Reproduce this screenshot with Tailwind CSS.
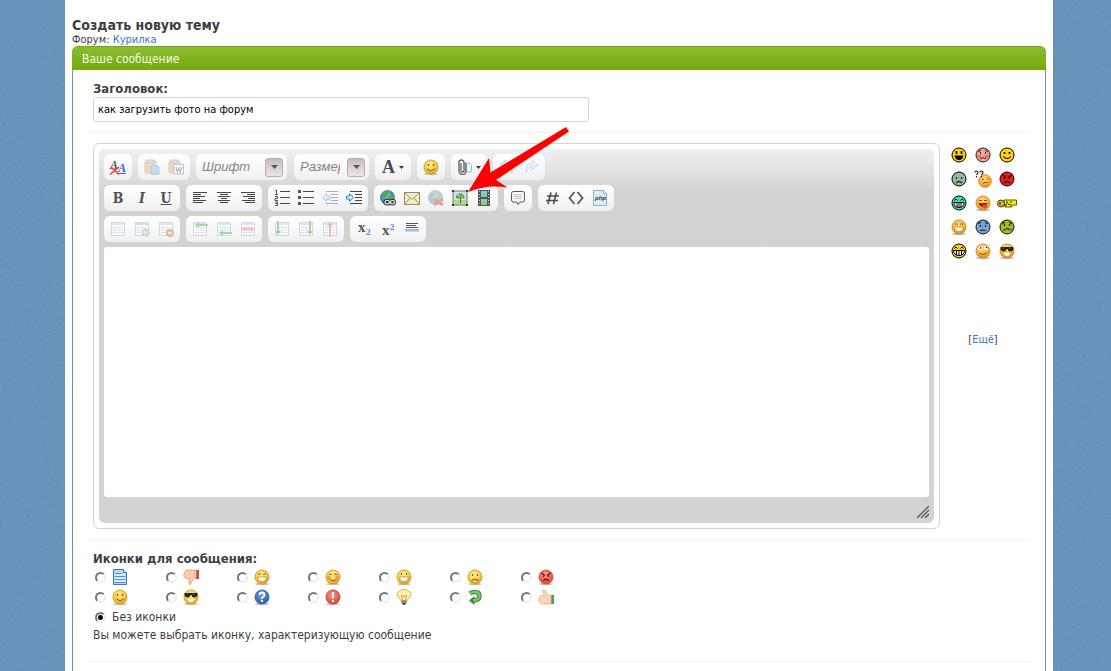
<!DOCTYPE html>
<html lang="ru">
<head>
  <meta charset="UTF-8">
  <meta name="viewport" content="width=device-width, initial-scale=1.0">
  <title>Создать новую тему</title>
  <script src="https://cdn.jsdelivr.net/npm/@tailwindcss/browser@4"></script>
</head>
<body class="relative min-h-screen bg-[#6691b9] font-['DejaVu_Sans_Condensed','DejaVu_Sans',sans-serif] font-stretch-condensed text-xs text-[#3e3e3e] overflow-x-hidden">

  <!-- Shared icon parts -->
  <svg class="absolute size-0" aria-hidden="true">
    <defs>
      <radialGradient id="gold" cx=".45" cy=".35" r=".65"><stop offset="0" stop-color="#fff0a0"/><stop offset=".6" stop-color="#f9cf4a"/><stop offset="1" stop-color="#dd9a1c"/></radialGradient>
      <radialGradient id="orange" cx=".45" cy=".3" r=".7"><stop offset="0" stop-color="#ffe080"/><stop offset=".6" stop-color="#f6b436"/><stop offset="1" stop-color="#e2862a"/></radialGradient>
      <radialGradient id="red" cx=".45" cy=".35" r=".65"><stop offset="0" stop-color="#f89a8c"/><stop offset="1" stop-color="#dc4436"/></radialGradient>
      <radialGradient id="blue" cx=".45" cy=".35" r=".65"><stop offset="0" stop-color="#6fa0d8"/><stop offset="1" stop-color="#2c5fa5"/></radialGradient>
      <radialGradient id="globe" cx=".4" cy=".3" r=".7"><stop offset="0" stop-color="#9cc8ff"/><stop offset="1" stop-color="#1c4fc0"/></radialGradient>
      <filter id="noise" x="0" y="0" width="100%" height="100%"><feTurbulence type="fractalNoise" baseFrequency=".45" numOctaves="3"/><feColorMatrix values="0 0 0 0 .2  0 0 0 0 .32  0 0 0 0 .5  2 0 0 0 -.8"/></filter>
    </defs>
    <symbol id="ball" viewBox="0 0 16 16"><ellipse cx="8" cy="15" rx="7" ry="1" fill="#bbb"/><circle cx="8" cy="8" r="7" fill="url(#gold)" stroke="#d9a01f"/></symbol>
    <symbol id="oball" viewBox="0 0 16 16"><ellipse cx="8" cy="15" rx="7" ry="1" fill="#bbb"/><circle cx="8" cy="8" r="7" fill="url(#orange)" stroke="#dc8a2c"/></symbol>
    <symbol id="grin" viewBox="0 0 16 16"><path d="M4 5.500q1.500-1.500 3 0M9 5.500q1.500-1.500 3 0" fill="none" stroke="#8a5a10"/><path d="M3.500 8h9q-.5 4.500-4.500 4.500T3.500 8z" fill="#fff" stroke="#b97a1a" stroke-width=".7"/></symbol>
    <symbol id="smile" viewBox="0 0 16 16"><path d="M5.500 5v2M10.500 5v2" stroke="#7a5210" stroke-width="1.300"/><path d="M4 9.500q4 4 8 0" fill="none" stroke="#8a5a10"/></symbol>
    <symbol id="shades" viewBox="0 0 16 16"><path d="M1.500 4h13v1.500q-.5 3-3.200 3Q9 8.500 8.500 6h-1Q7 8.500 4.700 8.500q-2.700 0-3.200-3z" fill="#222"/><path d="M3 5l2 0M9.500 5h2" stroke="#777" stroke-width=".8"/><path d="M4.500 10h7q-1 3-3.500 3t-3.500-3z" fill="#fff"/></symbol>
    <symbol id="grid" viewBox="0 0 16 16"><path d="M1.500 1.500h13v13h-13z" fill="#fff" stroke="#9fbfe4"/><path d="M2 2h12v2H2z" fill="#bcd7f3"/><path d="M3 6.500h3M7 6.500h3M11 6.500h2M3 9h3M7 9h3M11 9h2M3 11.500h3M7 11.500h3M11 11.500h2" stroke="#a8c6e6"/></symbol>
    <symbol id="earth" viewBox="0 0 16 16"><circle cx="7.500" cy="7.500" r="7" fill="url(#globe)" stroke="#234e95" stroke-width=".6"/><path d="M2 3.500Q4.500.500 8 1l1 2-2 1 1 2-3 1-1 2-2-2zM9 6l4-2 1.500 3-1.500 4-3 2-2-3zM3 10l3 1 0 3q-2-.6-3-2.500z" fill="#4fae3c"/></symbol>
  </svg>

  <!-- Grainy page background -->
  <svg class="absolute inset-0 w-full h-full opacity-60" aria-hidden="true"><rect width="100%" height="100%" filter="url(#noise)"/></svg>

  <div class="relative bg-white ml-[65px] mr-[58px] min-h-screen px-[7px] pt-4">
    <h1 class="text-[14px] leading-[18px] font-bold">Создать новую тему</h1>
    <p class="text-[11px] leading-3">Форум: <a href="#" class="text-[#3a76b8]">Курилка</a></p>

    <form class="block">
      <h2 class="h-6 px-[10px] leading-6 text-[#f4fbe6] text-xs rounded-t-md border-t border-[#73a80a] bg-linear-to-b from-[#8cbc30] to-[#73aa05]">Ваше сообщение</h2>

      <div class="border-x border-[#6d92ad] px-[15px] pt-[10px]">
        <!-- Subject -->
        <div class="px-[5px]">
          <label for="subject" class="block text-[13px] leading-[17px] font-bold">Заголовок:</label>
          <input id="subject" type="text" value="как загрузить фото на форум" class="block w-full max-w-[496px] h-[25px] px-1 text-[11px] text-black bg-white border border-[#d3d3d3] rounded-[3px]">
        </div>
        <hr class="mt-[10px] border-[#f2f2f2]">

        <div class="mt-[10px] px-[5px] flex items-start">
          <!-- Editor -->
          <div class="relative flex-1 min-w-0 border border-[#d3d3d3] rounded-md p-[5px]">
            <div class="rounded-md bg-[#d3d3d3] px-[5px] pt-[5px]">
              <div class="-mx-[5px] -mt-[5px] px-[5px] pt-[5px] pb-[5px] rounded-t-md bg-linear-to-b from-[#f0f0f0] from-0% to-[#d3d3d3] to-45% flex flex-col gap-[5px]">

                <div class="flex flex-wrap gap-[6px] *:h-[26px] *:rounded-md *:bg-linear-to-b *:from-white *:to-[#f0f0f0] *:flex *:items-center">
                  <div class="px-[4px]">
                    <button type="button" aria-label="Убрать форматирование" class="w-5 grid place-items-center"><svg class="size-[18px]" viewBox="0 0 18 18"><g font-family="Liberation Serif" font-weight="bold" font-style="italic" font-size="12"><text x="1" y="11" fill="#555">A</text><text x="9" y="14" fill="#2f62e8">A</text></g><path d="M8 15.500h9" stroke="#2f62e8"/><path d="M2 9l8 7.500M10 9L1 16.500" stroke="#ee3a3a" stroke-width="1.600"/></svg></button>
                  </div>
                  <div class="px-[2px] *:w-6 *:grid *:place-items-center">
                    <button type="button" aria-label="Вставить"><svg class="size-4 opacity-40" viewBox="0 0 16 16"><rect x="1" y="2" width="11" height="12" rx="1" fill="#e5ab65" stroke="#c08440"/><path d="M3.500 1h6v3h-6z" fill="#bbb" stroke="#888"/><path d="M7 7l5-1 3 2v7l-7 .5z" fill="#69bff0" stroke="#3b91c8"/></svg></button>
                    <button type="button" aria-label="Вставить из Word"><svg class="size-4 opacity-40" viewBox="0 0 16 16"><rect x="1" y="2" width="11" height="12" rx="1" fill="#e5ab65" stroke="#c08440"/><path d="M3.500 1h6v3h-6z" fill="#bbb" stroke="#888"/><rect x="6" y="5.500" width="9.500" height="9.500" fill="#fff" stroke="#6e7fa5"/><path d="M8 8l1.300 5L11 9l1.300 4L14 8" fill="none" stroke="#485b86" stroke-width="1.200"/></svg></button>
                  </div>
                  <div class="w-[91px] pl-[6px] pr-1">
                    <select aria-label="Шрифт" class="appearance-none flex-1 min-w-0 h-5 font-['Liberation_Sans',sans-serif] italic text-[13px] text-[#858585]"><option>Шрифт</option></select>
                    <span class="w-[18px] h-[19px] rounded-[3px] border border-[#b5b0b0] bg-linear-to-b from-[#c4bcbc] to-[#eee6e6] grid place-items-center pointer-events-none"><svg class="w-[7px] h-[4px]" viewBox="0 0 7 4"><path d="M0 0h7L3.500 4z" fill="#555"/></svg></span>
                  </div>
                  <div class="ml-px w-[75px] pl-[6px] pr-1">
                    <select aria-label="Размер" class="appearance-none w-10 mr-auto h-5 overflow-hidden text-clip font-['Liberation_Sans',sans-serif] italic text-[13px] text-[#858585]"><option>Размер</option></select>
                    <span class="shrink-0 w-[18px] h-[19px] rounded-[3px] border border-[#b5b0b0] bg-linear-to-b from-[#c4bcbc] to-[#eee6e6] grid place-items-center pointer-events-none"><svg class="w-[7px] h-[4px]" viewBox="0 0 7 4"><path d="M0 0h7L3.500 4z" fill="#555"/></svg></span>
                  </div>
                  <div class="px-[7px]">
                    <button type="button" aria-label="Цвет текста" class="w-[22px] flex items-center gap-1 font-['Liberation_Serif',serif] font-bold text-[18px] text-[#4a4a4a] leading-none">A<svg class="shrink-0 w-[5px] h-[3px]" viewBox="0 0 5 3"><path d="M0 0h5L2.500 3z" fill="#333"/></svg></button>
                  </div>
                  <div class="px-[4px]">
                    <button type="button" aria-label="Смайлы" class="w-5 grid place-items-center"><svg class="size-4"><use href="#ball"/><use href="#smile"/></svg></button>
                  </div>
                  <div class="px-[7px]">
                    <button type="button" aria-label="Вложения" class="w-[22px] flex items-center gap-1"><svg class="shrink-0 w-[14px] h-4" viewBox="0 0 14 16"><path d="M7 4h4l2.500 2.500V13H7z" fill="#eef5ff" stroke="#9fbce0"/><path d="M3 4v7.500a1.500 1.500 0 003 0V3.500a2.500 2.500 0 00-5 0V12a3.400 3.400 0 007 0V4" fill="none" stroke="#666" stroke-width="1.400"/></svg><svg class="shrink-0 w-[5px] h-[3px]" viewBox="0 0 5 3"><path d="M0 0h5L2.500 3z" fill="#333"/></svg></button>
                  </div>
                  <div class="px-[2px] *:w-6 *:grid *:place-items-center">
                    <button type="button" aria-label="Отменить"><svg class="size-4 opacity-50" viewBox="0 0 16 16"><path d="M1 6l6-5v3q7 0 6 10-1-6-6-5.500V11z" fill="#b4def5" stroke="#5aa6d8"/></svg></button>
                    <button type="button" aria-label="Повторить"><svg class="size-4 opacity-30" viewBox="0 0 16 16"><path d="M15 6L9 1v3Q2 4 3 14q1-6 6-5.500V11z" fill="#b4def5" stroke="#5aa6d8"/></svg></button>
                  </div>
                </div>

                <div class="flex flex-wrap gap-[6px] *:h-[26px] *:px-[2px] *:rounded-md *:bg-linear-to-b *:from-white *:to-[#f0f0f0] *:flex *:items-center">
                  <div class="*:w-6 *:text-center font-['DejaVu_Serif',serif] font-bold text-[14px] text-[#4f5058] leading-none">
                    <button type="button" aria-label="Полужирный">B</button>
                    <button type="button" aria-label="Курсив" class="italic">I</button>
                    <button type="button" aria-label="Подчёркнутый" class="underline">U</button>
                  </div>
                  <div class="*:w-6 *:grid *:place-items-center">
                    <button type="button" aria-label="По левому краю"><svg class="size-4" viewBox="0 0 16 16"><path d="M1 2.500h14M1 4.500h8M1 6.500h12M1 8.500h7M1 10.500h13M1 12.500h10" stroke="#444"/></svg></button>
                    <button type="button" aria-label="По центру"><svg class="size-4" viewBox="0 0 16 16"><path d="M1 2.500h14M4 4.500h8M2 6.500h12M5 8.500h6M2 10.500h12M4 12.500h8" stroke="#444"/></svg></button>
                    <button type="button" aria-label="По правому краю"><svg class="size-4" viewBox="0 0 16 16"><path d="M1 2.500h14M7 4.500h8M3 6.500h12M8 8.500h7M2 10.500h13M5 12.500h10" stroke="#444"/></svg></button>
                  </div>
                  <div class="*:w-6 *:grid *:place-items-center">
                    <button type="button" aria-label="Нумерованный список"><svg class="size-4" viewBox="0 0 16 16"><path d="M1 .5h1.500V4M1 4.500h3M1 6.500h2.500v2H1v2h3M1 12h2.500v3.500H1M1.500 13.500h2" fill="none" stroke="#50506a"/><path d="M6 1.500h10M6 7.500h10M6 13.500h10" stroke="#444"/></svg></button>
                    <button type="button" aria-label="Маркированный список"><svg class="size-4" viewBox="0 0 16 16"><path d="M0 0h3v3H0zM0 6h3v3H0zM0 12h3v3H0z" fill="#50506a"/><path d="M5 1.500h11M5 7.500h11M5 13.500h11" stroke="#444"/></svg></button>
                    <button type="button" aria-label="Уменьшить отступ"><svg class="size-4 opacity-40" viewBox="0 0 16 16"><path d="M4 1.500h12M9 4.500h7M9 7.500h7M9 10.500h7M4 13.500h12" stroke="#444"/><path d="M.5 7.500l4-4v2.500H8v3H4.500v2.500z" fill="#cdeeff" stroke="#2788c8"/></svg></button>
                    <button type="button" aria-label="Увеличить отступ"><svg class="size-4" viewBox="0 0 16 16"><path d="M4 1.500h12M9 4.500h7M9 7.500h7M9 10.500h7M4 13.500h12" stroke="#444"/><path d="M7.500 7.500l-4-4v2.500H.5v3h3v2.500z" fill="#cdeeff" stroke="#2788c8"/></svg></button>
                  </div>
                  <div class="*:w-6 *:grid *:place-items-center">
                    <button type="button" aria-label="Вставить ссылку"><svg class="size-4" viewBox="0 0 16 16"><use href="#earth"/><g fill="none" stroke="#333" stroke-width="3"><rect x="5" y="10.500" width="4.500" height="3.500" rx="1.700"/><rect x="10.500" y="10.500" width="4" height="3.500" rx="1.700"/></g><g fill="none" stroke="#eee" stroke-width="1.200"><rect x="5" y="10.500" width="4.500" height="3.500" rx="1.700"/><rect x="10.500" y="10.500" width="4" height="3.500" rx="1.700"/></g></svg></button>
                    <button type="button" aria-label="Вставить e-mail"><svg class="size-4" viewBox="0 0 16 16"><path d="M.5 2.500h15v12H.5z" fill="#f0edc6" stroke="#8f8d6a"/><path d="M1 3l7 6.500L15 3M1 14l5-6M15 14l-5-6" fill="none" stroke="#99966e"/></svg></button>
                    <button type="button" aria-label="Удалить ссылку"><svg class="size-4 opacity-40" viewBox="0 0 16 16"><use href="#earth"/><path d="M6 9l9 6M15 9l-9 6" stroke="#e02020" stroke-width="3"/></svg></button>
                    <button type="button" aria-label="Вставить изображение"><svg class="size-4" viewBox="0 0 16 16"><path d="M1 1h14v14H1z" fill="#c4e2fa"/><path d="M1 10h14v5H1z" fill="#b4dc7c"/><path d="M8 8h1v5H8z" fill="#7a5230"/><path d="M4 7q0-2 2-2.500Q7 2.500 9 3.500q2.500 0 3 2.500 1.500 2-1 2.500H5Q3.500 8.500 4 7z" fill="#5c9b38"/><circle cx="7" cy="5.800" r="1.200" fill="#a2d46c"/><circle cx="10" cy="6.500" r="1" fill="#a2d46c"/><path d="M1 1h14v14H1z" fill="none" stroke="#777"/><path d="M0 0h2v2H0zM14 0h2v2h-2zM0 14h2v2H0zM14 14h2v2h-2z" fill="#333"/></svg></button>
                    <button type="button" aria-label="Вставить видео"><svg class="size-4" viewBox="0 0 16 16"><path d="M2 0h12v16H2z" fill="#555"/><path d="M3.500 1v15M12.500 1v15" stroke="#ccc" stroke-dasharray="1 2"/><path d="M5 1h6v6H5zM5 9h6v6H5z" fill="#7cc8ef"/><path d="M5 5l3-2 3 2v2H5zM5 13l3-2 3 2v2H5z" fill="#8fd058"/></svg></button>
                  </div>
                  <div class="*:w-6 *:grid *:place-items-center">
                    <button type="button" aria-label="Цитата"><svg class="size-4" viewBox="0 0 16 16"><path d="M3.500 1.500h9a2 2 0 012 2v6.500a2 2 0 01-2 2H10l-2 2.500L7 12H3.500a2 2 0 01-2-2V3.500a2 2 0 012-2z" fill="#fafafa" stroke="#555"/><path d="M4 4.500h8M4 6.500h8M4 8.500h8" stroke="#c2c2c2"/></svg></button>
                  </div>
                  <div class="*:w-6 *:grid *:place-items-center">
                    <button type="button" aria-label="Код"><svg class="size-4" viewBox="0 0 16 16"><path d="M7 2.500L4 14M12.500 2.500L9.500 14M3 6h12M2 10.500h12" stroke="#4a4a4a" stroke-width="1.600"/></svg></button>
                    <button type="button" aria-label="HTML"><svg class="size-4" viewBox="0 0 16 16"><path d="M6.500 2L1.500 8l5 6M9.500 2l5 6-5 6" fill="none" stroke="#555" stroke-width="1.800"/></svg></button>
                    <button type="button" aria-label="PHP"><svg class="size-4" viewBox="0 0 16 16"><path d="M1.500.500h10l3 3v12h-13z" fill="#dcebfa" stroke="#8eaed8"/><path d="M11.500.500v3h3" fill="#fff" stroke="#8eaed8"/><text x="3" y="10" font-family="Liberation Sans" font-weight="bold" font-style="italic" font-size="6" fill="#333">php</text></svg></button>
                  </div>
                </div>

                <div class="flex flex-wrap gap-[6px] *:h-[26px] *:px-[2px] *:rounded-md *:bg-linear-to-b *:from-white *:to-[#f0f0f0] *:flex *:items-center">
                  <div class="*:w-6 *:grid *:place-items-center">
                    <button type="button" aria-label="Таблица"><svg class="size-4 opacity-50"><use href="#grid"/></svg></button>
                    <button type="button" aria-label="Свойства таблицы"><svg class="size-4 opacity-50" viewBox="0 0 16 16"><use href="#grid"/><path d="M2 2h12v2H2z" fill="#a8d4a0"/><circle cx="11.500" cy="11.500" r="3" fill="#ddd" stroke="#999" stroke-width="2" stroke-dasharray="2 1"/></svg></button>
                    <button type="button" aria-label="Удалить таблицу"><svg class="size-4 opacity-50" viewBox="0 0 16 16"><use href="#grid"/><circle cx="12" cy="12" r="3.500" fill="#f08a4a" stroke="#d86020"/><path d="M10 12h4" stroke="#fff" stroke-width="1.400"/></svg></button>
                  </div>
                  <div class="*:w-6 *:grid *:place-items-center">
                    <button type="button" aria-label="Строка выше"><svg class="size-4 opacity-50" viewBox="0 0 16 16"><use href="#grid"/><path d="M16 3H7V1L3 4l4 3V5h9z" fill="#63ac58"/></svg></button>
                    <button type="button" aria-label="Строка ниже"><svg class="size-4 opacity-50" viewBox="0 0 16 16"><use href="#grid"/><path d="M16 11H7V9l-4 3 4 3v-2h9z" fill="#63ac58"/></svg></button>
                    <button type="button" aria-label="Удалить строку"><svg class="size-4 opacity-50" viewBox="0 0 16 16"><use href="#grid"/><path d="M1 6.500h10V5l4 3-4 3V9.500H1z" fill="#f59090"/></svg></button>
                  </div>
                  <div class="*:w-6 *:grid *:place-items-center">
                    <button type="button" aria-label="Столбец слева"><svg class="size-4 opacity-50" viewBox="0 0 16 16"><use href="#grid"/><path d="M3 0v10H1l3 4 3-4H5V0z" fill="#63ac58"/></svg></button>
                    <button type="button" aria-label="Столбец справа"><svg class="size-4 opacity-50" viewBox="0 0 16 16"><use href="#grid"/><path d="M11 0v10H9l3 4 3-4h-2V0z" fill="#63ac58"/></svg></button>
                    <button type="button" aria-label="Удалить столбец"><svg class="size-4 opacity-50" viewBox="0 0 16 16"><use href="#grid"/><path d="M7 16V5H5l3-4 3 4H9v11z" fill="#f07878"/></svg></button>
                  </div>
                  <div class="*:w-6 *:grid *:place-items-center">
                    <button type="button" aria-label="Нижний индекс"><svg class="size-4" viewBox="0 0 16 16"><g font-family="Liberation Serif" font-weight="bold"><text x="2" y="11" font-size="15" fill="#555">x</text><text x="10" y="14" font-size="9" fill="#4c86d0">2</text></g></svg></button>
                    <button type="button" aria-label="Верхний индекс"><svg class="size-4" viewBox="0 0 16 16"><g font-family="Liberation Serif" font-weight="bold"><text x="2" y="14" font-size="15" fill="#555">x</text><text x="10" y="9" font-size="9" fill="#4c86d0">2</text></g></svg></button>
                    <button type="button" aria-label="Линия"><svg class="size-4" viewBox="0 0 16 16"><path d="M2 2.500h12M2 4.500h10M2 6.500h12" stroke="#555"/><path d="M1 8h14v2.500H1z" fill="#9dbdea"/></svg></button>
                  </div>
                </div>
              </div>

              <textarea aria-label="Текст сообщения" class="block w-full h-[250px] bg-white rounded-[3px] resize-none p-2"></textarea>
              <div class="h-[26px] flex justify-end items-center pt-1">
                <svg class="size-3" viewBox="0 0 12 12"><path d="M0 12L12 0M4 12l8-8M8 12l4-4" stroke="#555" stroke-width="1.300"/></svg>
              </div>
            </div>

            <!-- Arrow pointing at the image button -->
            <svg class="absolute left-[374px] -top-[17px] w-[104px] h-[66px] pointer-events-none" viewBox="468 127 104 66"><path d="M468 192l21-34 1.500 14.500L566 127l3 4.500-73 48.500 11.500 7.500Q487 184 468 192z" fill="#f00"/></svg>
          </div>

          <!-- Smilies -->
          <div class="w-[72px] ml-[7px] mr-[6px]">
            <div class="grid grid-cols-3 *:h-6 *:grid *:place-items-center">
              <button type="button" aria-label="Смех"><svg class="size-4" viewBox="0 0 16 16"><circle cx="8" cy="8" r="7" fill="#ffd21a" stroke="#000"/><path d="M5.500 4v3M10.500 4v3" stroke="#000" stroke-width="1.600"/><path d="M3.500 8.500h9q-1 4.500-4.500 4.500T3.500 8.500z"/></svg></button>
              <button type="button" aria-label="Смущение"><svg class="size-4" viewBox="0 0 16 16"><circle cx="8" cy="8" r="7" fill="#eda898" stroke="#222"/><path d="M2 8h4v3H3zM10 8h4l-1 3h-3z" fill="#f06a60"/><path d="M3 5l3-2M10 3l3 2M5.500 5v2M10.500 5v2M5 12q3-3 6 0" fill="none" stroke="#402020"/></svg></button>
              <button type="button" aria-label="Улыбка"><svg class="size-4" viewBox="0 0 16 16"><circle cx="8" cy="8" r="7" fill="#ffd21a" stroke="#000"/><path d="M5.500 5v2M10.500 5v2" stroke="#000" stroke-width="1.600"/><path d="M4 9.500q4 4 8 0" fill="none" stroke="#000"/></svg></button>
              <button type="button" aria-label="Грусть"><svg class="size-4" viewBox="0 0 16 16"><circle cx="8" cy="8" r="7" fill="#94b89c" stroke="#000"/><path d="M5.500 6v2M10.500 6v2M5 12q3-3 6 0" fill="none" stroke="#1c2c20" stroke-width="1.200"/></svg></button>
              <button type="button" aria-label="Вопрос"><svg class="size-[18px]" viewBox="0 0 18 18"><circle cx="11" cy="11" r="6.300" fill="url(#orange)" stroke="#dc8a2c"/><path d="M8 9.500l2-.5M13 8.500l1.500.5M9 13.500q2-2 5-1" fill="none" stroke="#80500f"/><path d="M1 2.500q0-1.500 1.500-1.500t1.500 1.500L2.500 5M2.500 6v1.500M6 2.500q0-1.500 1.500-1.500T9 2.500L7.500 5M7.500 6v1.500" fill="none" stroke="#222" stroke-width="1.200"/></svg></button>
              <button type="button" aria-label="Злость"><svg class="size-4" viewBox="0 0 16 16"><circle cx="8" cy="8" r="7" fill="#dd2020" stroke="#300"/><path d="M3.500 4l3.500 3M12.500 4L9 7M5.500 7v1M10.500 7v1M5 12q3-3 6 0" fill="none" stroke="#300" stroke-width="1.300"/></svg></button>
              <button type="button" aria-label="Оскал"><svg class="size-4" viewBox="0 0 16 16"><circle cx="8" cy="8" r="7" fill="#3fe0b8" stroke="#000"/><path d="M3.500 5.500L5 4l1.500 1.500M9.500 5.500L11 4l1.500 1.500" fill="none" stroke="#000"/><path d="M3 7.500h10q0 5-5 5t-5-5z" fill="#fff" stroke="#000"/><path d="M6 8v4M8 8v5M10 8v4" stroke="#000"/></svg></button>
              <button type="button" aria-label="Язык"><svg class="size-4" viewBox="0 0 16 16"><use href="#oball"/><path d="M4 5.500h3M9 5.500h3" stroke="#80500f"/><path d="M3.500 8h9q-1 4-4.500 4T3.500 8z" fill="#7a2a10"/><path d="M7 9.500h5v3q-2.500 2-4 0z" fill="#f04040"/></svg></button>
              <button type="button" aria-label="Драка"><svg class="w-5 h-4" viewBox="0 0 20 16"><circle cx="4" cy="8.500" r="3.500" fill="#d8b030" stroke="#553c08"/><path d="M3 7v3" stroke="#222"/><path d="M7 5h12.500v5H15v2H8z" fill="#f4f000" stroke="#5a5a00"/><path d="M10 6v3M14 6v2M7 10h3M11 9l3 1" stroke="#222"/></svg></button>
              <button type="button" aria-label="Улыбка до ушей"><svg class="size-4"><use href="#oball"/><use href="#grin"/></svg></button>
              <button type="button" aria-label="Растерянность"><svg class="size-4" viewBox="0 0 16 16"><circle cx="8" cy="8" r="7" fill="#7fa4cc" stroke="#101820"/><path d="M3 5l3-2M10 3l3 2M5.500 6v2M10.500 6v2M5 11.500l3-.5 3 .5" fill="none" stroke="#182838" stroke-width="1.200"/></svg></button>
              <button type="button" aria-label="Слёзы"><svg class="size-4" viewBox="0 0 16 16"><circle cx="8" cy="8" r="7" fill="#a5bd18" stroke="#181c00"/><path d="M3 5l3-2M10 3l3 2M5.500 5v2M10.500 5v2M4.500 12q3-4 6-1" fill="none" stroke="#242c00" stroke-width="1.200"/><circle cx="12" cy="10.500" r="1.500" fill="#3884a8"/></svg></button>
              <button type="button" aria-label="Зубы"><svg class="size-4" viewBox="0 0 16 16"><circle cx="8" cy="8" r="7" fill="#ffc814" stroke="#000"/><path d="M3.500 5.500L5 4l1.500 1.500M9.500 5.500L11 4l1.500 1.500" fill="none" stroke="#000"/><path d="M2.500 7.500h11q-.5 5-5.500 5t-5.500-5z" fill="#fff" stroke="#000"/><path d="M5.500 8v4M8 8v5M10.500 8v4" stroke="#000"/></svg></button>
              <button type="button" aria-label="Глаза вверх"><svg class="size-4" viewBox="0 0 16 16"><use href="#oball"/><circle cx="5" cy="5.500" r="2" fill="#fff"/><circle cx="11" cy="5" r="2" fill="#fff"/><circle cx="5.500" cy="5" r=".8"/><circle cx="11.500" cy="4.500" r=".8"/><path d="M4.500 10q4 3 7-.5" fill="none" stroke="#80500f"/></svg></button>
              <button type="button" aria-label="Крутой"><svg class="size-4"><use href="#oball"/><use href="#shades"/></svg></button>
            </div>
            <p class="mt-[69px] text-center text-[11px] leading-4">[<a href="#" class="text-[#3a76b8]">Ещё</a>]</p>
          </div>
        </div>
        <hr class="mt-[10px] border-[#f2f2f2]">

        <!-- Message icons -->
        <fieldset class="mt-[10px] px-[5px]">
          <legend class="text-[13px] leading-[17px] font-bold">Иконки для сообщения:</legend>
          <div class="grid grid-cols-[repeat(7,71px)] pl-[2px] *:h-5 *:flex *:items-center *:gap-[6px] **:[input]:appearance-none **:[input]:size-[11px] **:[input]:rounded-full **:[input]:border-2 **:[input]:border-t-[#777] **:[input]:border-l-[#777] **:[input]:border-r-[#eee] **:[input]:border-b-[#eee]">
            <label><input type="radio" name="icon" aria-label="Документ"><svg class="size-4" viewBox="0 0 16 16"><path d="M1.500.500h10l3 3v12h-13z" fill="#b8daf8" stroke="#3a76c8"/><path d="M11.500.500v3h3" fill="#fff" stroke="#3a76c8"/><path d="M3 4.500h7M3 7.500h10M3 10.500h10M3 13.500h10" stroke="#4a90e0"/><path d="M3 6h10M3 9h10M3 12h10" stroke="#fff"/></svg></label>
            <label><input type="radio" name="icon" aria-label="Палец вниз"><svg class="size-4" viewBox="0 0 16 16"><path d="M13 1h3v9h-3z" fill="#c84848"/><path d="M13 1H4Q2 1 2 3 .5 4 1 5.500 0 7 1.500 8q0 1.500 2 1.500h3q-1.500 4 0 6 2 0 2-2.500Q9.500 10 13 9z" fill="#fcc8ae" stroke="#e89a80" stroke-width=".8"/></svg></label>
            <label><input type="radio" name="icon" aria-label="Смех"><svg class="size-4"><use href="#ball"/><use href="#grin"/></svg></label>
            <label><input type="radio" name="icon" aria-label="Смущение"><svg class="size-4" viewBox="0 0 16 16"><use href="#ball"/><circle cx="3.800" cy="8.500" r="1.800" fill="#f49a50"/><circle cx="12.200" cy="8.500" r="1.800" fill="#f49a50"/><path d="M4 6q1.500-2 3 0M9 6q1.500-2 3 0M4.500 10q3.500 3.500 7 0" fill="none" stroke="#80500f"/></svg></label>
            <label><input type="radio" name="icon" aria-label="Радость"><svg class="size-4" viewBox="0 0 16 16"><use href="#ball"/><path d="M5.500 4v2M10.500 4v2" stroke="#80500f"/><path d="M3.500 8h9q-.5 4.500-4.500 4.500T3.500 8z" fill="#fff" stroke="#b97a1a" stroke-width=".7"/></svg></label>
            <label><input type="radio" name="icon" aria-label="Грусть"><svg class="size-4" viewBox="0 0 16 16"><use href="#ball"/><path d="M5.500 5v2M10.500 5v2M4.500 11.500q3.500-3 7 0" fill="none" stroke="#80500f"/></svg></label>
            <label><input type="radio" name="icon" aria-label="Злость"><svg class="size-4" viewBox="0 0 16 16"><ellipse cx="8" cy="15" rx="7" ry="1" fill="#bbb"/><circle cx="8" cy="8" r="7" fill="url(#red)" stroke="#d8564a"/><path d="M3.500 4l3.500 2.500M12.500 4L9 6.500M5.500 6.500v1.500M10.500 6.500v1.500M5.500 11.500q2.500-2.500 5 0" fill="none" stroke="#701010" stroke-width="1.200"/></svg></label>
            <label><input type="radio" name="icon" aria-label="Улыбка"><svg class="size-4"><use href="#ball"/><use href="#smile"/></svg></label>
            <label><input type="radio" name="icon" aria-label="Крутой"><svg class="size-4"><use href="#ball"/><use href="#shades"/></svg></label>
            <label><input type="radio" name="icon" aria-label="Вопрос"><svg class="size-4" viewBox="0 0 16 16"><ellipse cx="8" cy="15" rx="7" ry="1" fill="#bbb"/><circle cx="8" cy="8" r="7" fill="url(#blue)" stroke="#3468a8"/><path d="M5.500 6q0-2.500 2.500-2.500T10.500 6q0 1-1.500 2t-1 2M8 11v2" fill="none" stroke="#fff" stroke-width="1.800"/></svg></label>
            <label><input type="radio" name="icon" aria-label="Внимание"><svg class="size-4" viewBox="0 0 16 16"><ellipse cx="8" cy="15" rx="7" ry="1" fill="#bbb"/><circle cx="8" cy="8" r="7" fill="url(#red)" stroke="#d8443a"/><path d="M8 3v6.500M8 11v2" stroke="#fff" stroke-width="2"/></svg></label>
            <label><input type="radio" name="icon" aria-label="Идея"><svg class="size-4" viewBox="0 0 16 16"><path d="M8 .6c4 0 6.800 2.200 6.800 5 0 2.600-3.300 3.900-4 6.400H5.200c-.7-2.500-4-3.800-4-6.400 0-2.800 2.800-5 6.800-5z" fill="#fff0b0" stroke="#eeaa38"/><path d="M6.500 11L5.500 6.500l2.500 1 2.500-1-1 4.500" fill="none" stroke="#e0a040"/><path d="M5.500 11.500h5v2.500L9 16H7l-1.500-2z" fill="#555"/><path d="M6 13h4" stroke="#bbb"/></svg></label>
            <label><input type="radio" name="icon" aria-label="Ответ"><svg class="size-4" viewBox="0 0 16 16"><path d="M3 4.500Q5 3 8 3q4.500 0 4.500 4T7 11.500" fill="none" stroke="#368a36" stroke-width="4.500"/><path d="M7.500 7v9L2 11.500z" fill="#368a36"/><path d="M3.500 4.500Q5 3 8 3q4.500 0 4.500 4T6 11.500" fill="none" stroke="#7cc274" stroke-width="2.600"/></svg></label>
            <label><input type="radio" name="icon" aria-label="Палец вверх"><svg class="size-4" viewBox="0 0 16 16"><path d="M13 6h3v9h-3z" fill="#4ca04c"/><path d="M13 15H4q-2 0-2-2Q.5 12 1 10.500 0 9 1.500 8q0-1.500 2-1.500h3Q4 2.500 5.500.700 8 1 8.500 4 10 6 13 7z" fill="#fcd4ba" stroke="#eeaa8c" stroke-width=".8"/></svg></label>
          </div>
          <label class="h-5 pl-[2px] flex items-center gap-[6px]"><input type="radio" name="icon" checked class="appearance-none size-[11px] rounded-full border-2 border-t-[#777] border-l-[#777] border-r-[#eee] border-b-[#eee] bg-[radial-gradient(circle,#000_2px,#fff_3px)]">Без иконки</label>
          <p class="leading-4">Вы можете выбрать иконку, характеризующую сообщение</p>
        </fieldset>
        <hr class="mt-[18px] border-[#f2f2f2]">
        <div class="h-[10px]"></div>
      </div>
    </form>
  </div>
</body>
</html>
